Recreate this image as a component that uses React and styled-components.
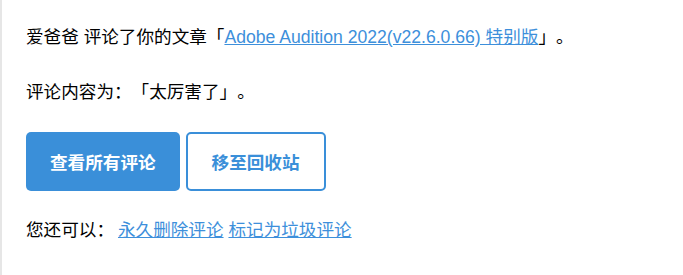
import React from 'react';
import styled, {createGlobalStyle} from 'styled-components';

const Global = createGlobalStyle`
    html, body {
        margin: 0;
        padding: 0;
        background: #fff;
    }
    body {
        font-family: "Liberation Sans", "Noto Sans CJK SC", sans-serif;
        font-size: 17.6px;
        color: #000;
        text-spacing-trim: space-all;
    }
`;

const Page = styled.div`
    min-height: 275px;
    box-sizing: border-box;
    border-left: 2px solid #e6e6e6;
    padding: 24px 0 0 24px;
`;

const Line = styled.p`
    margin: 0 0 ${p => p.$gap || 0}px;
    line-height: 26px;
`;

const Link = styled.a`
    color: #3d8fdb;
    text-decoration: underline;
    cursor: pointer;
`;

const Actions = styled.div`
    display: flex;
    gap: 6px;
    margin: 0 0 26px;
`;

const Button = styled.a`
    display: flex;
    align-items: center;
    justify-content: center;
    box-sizing: border-box;
    height: 59px;
    padding: 0 24px;
    border: ${p => (p.$primary ? 'none' : '2px solid #3a8fd9')};
    border-radius: 5px;
    font-size: 17.6px;
    font-weight: bold;
    text-decoration: none;
    cursor: pointer;
    background: ${p => (p.$primary ? '#3a8fd9' : '#fff')};
    color: ${p => (p.$primary ? '#fff' : '#3a8fd9')};
`;

const Label = styled.span`
    margin-right: 4px;
`;

export default function App() {
    return (
        <>
            <Global/>
            <Page>
                <Line $gap={29}>
                    爱爸爸 评论了你的文章「<Link>Adobe Audition 2022(v22.6.0.66) 特别版</Link>」。
                </Line>
                <Line $gap={27}>
                    评论内容为：「太厉害了」。
                </Line>
                <Actions>
                    <Button $primary>查看所有评论</Button>
                    <Button>移至回收站</Button>
                </Actions>
                <Line>
                    <Label>您还可以：</Label>
                    <Link>永久删除评论</Link> <Link>标记为垃圾评论</Link>
                </Line>
            </Page>
        </>
    );
}
